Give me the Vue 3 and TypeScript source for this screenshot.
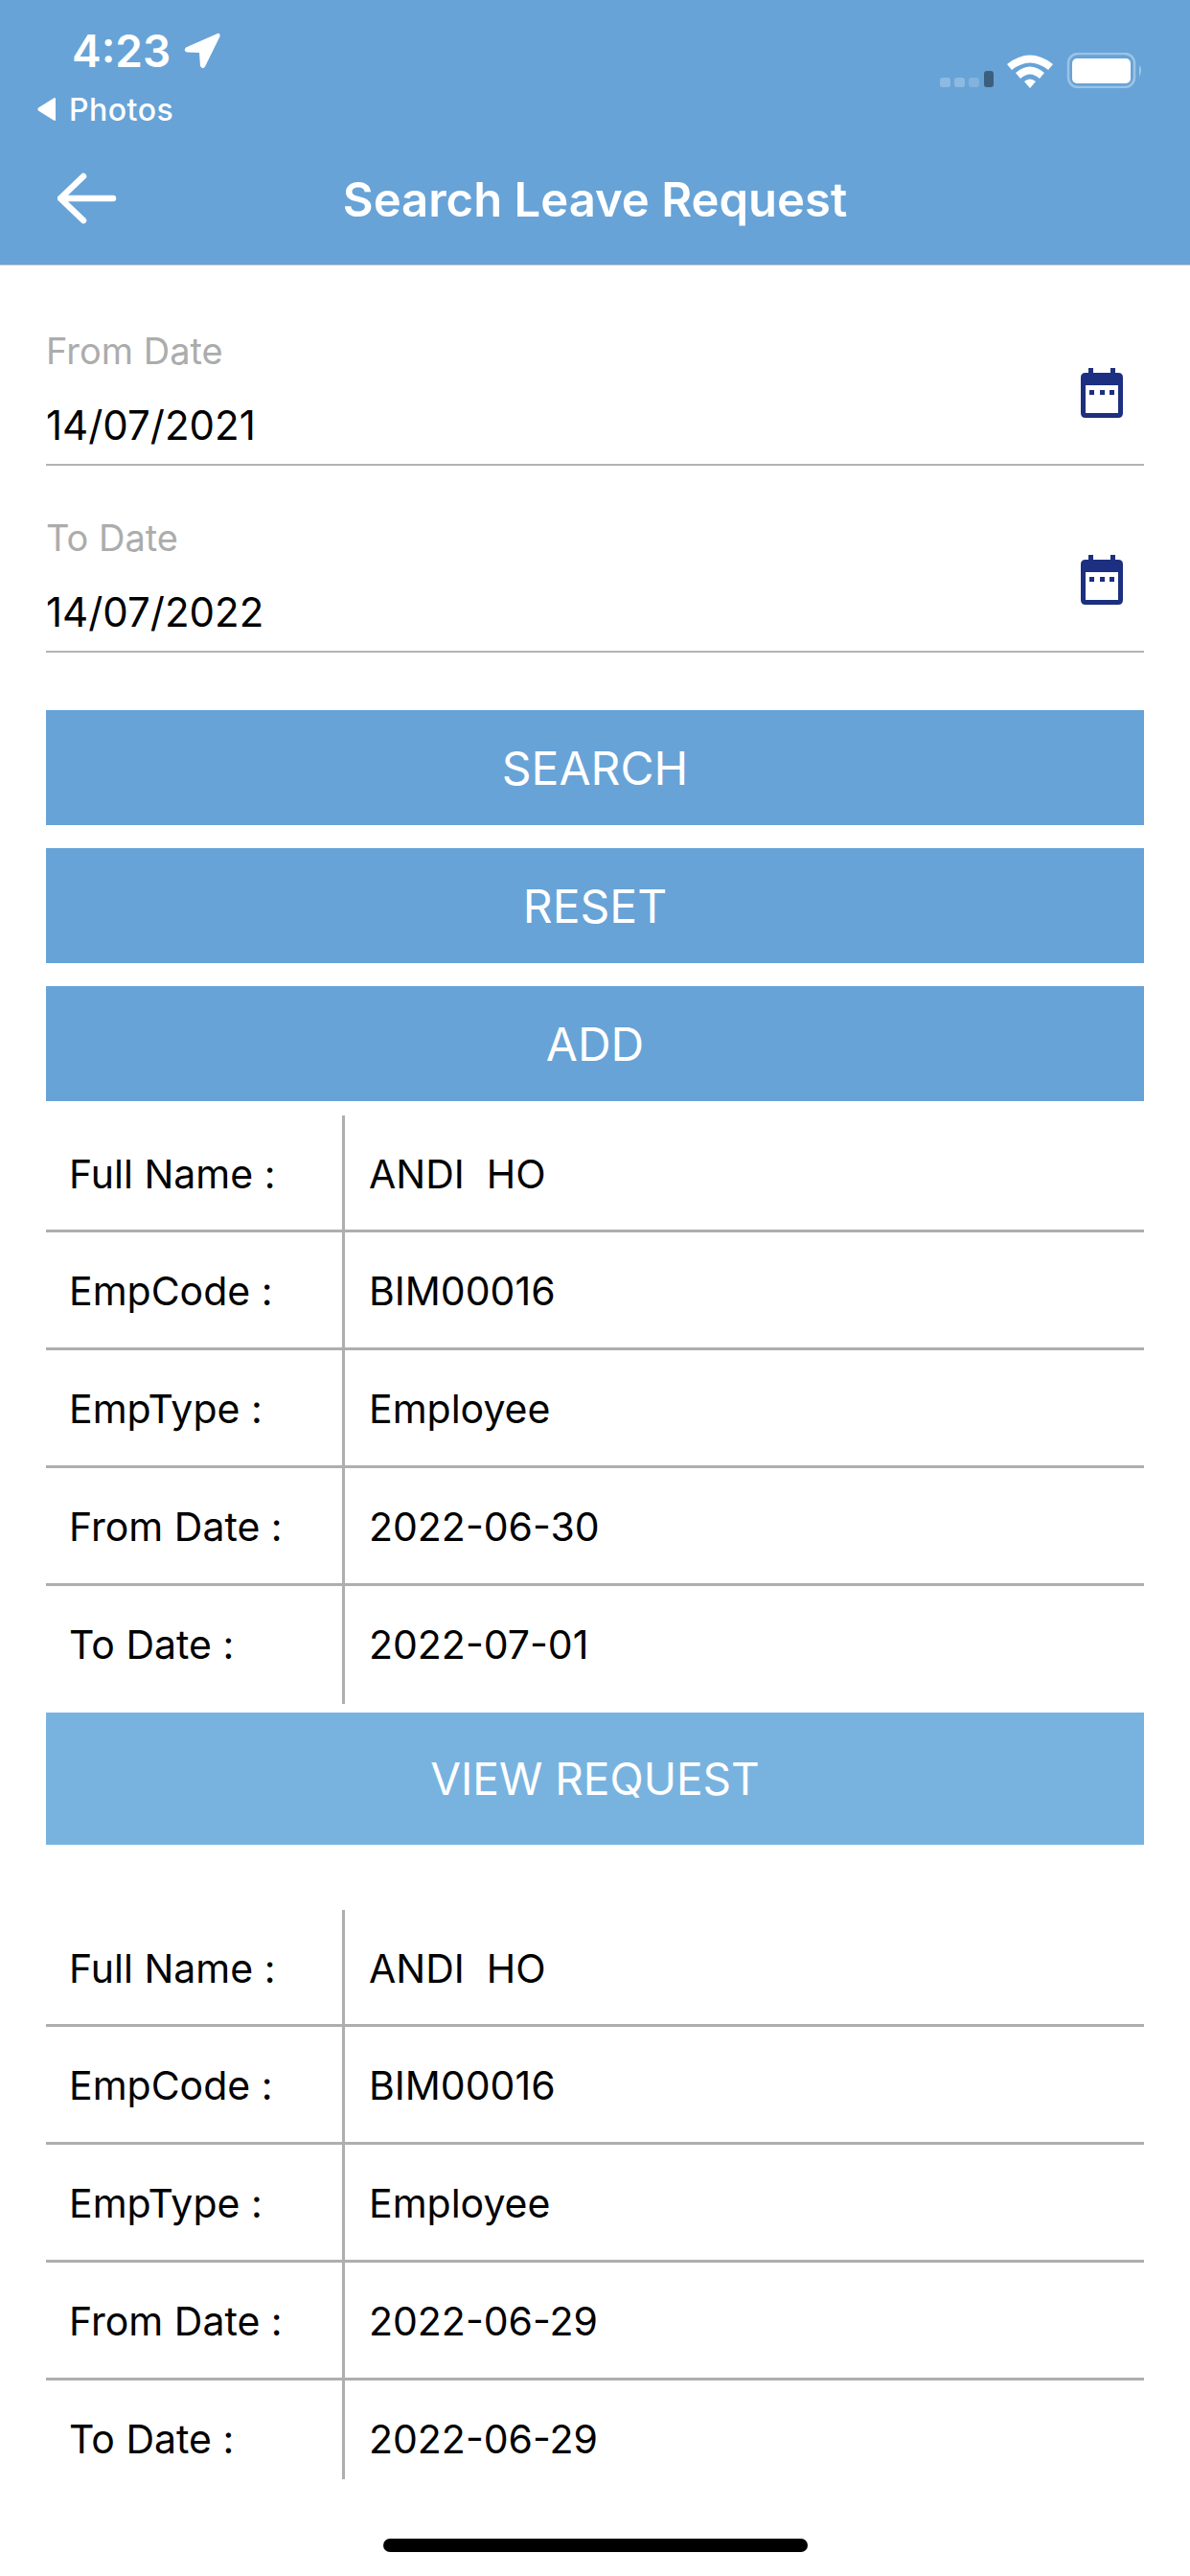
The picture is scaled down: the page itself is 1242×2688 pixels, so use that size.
<script setup lang="ts">
interface LeaveRow {
  fullName: string
  empCode: string
  empType: string
  fromDate: string
  toDate: string
}

const dateFields = [
  { label: 'From Date', value: '14/07/2021' },
  { label: 'To Date', value: '14/07/2022' },
]

const actions = ['SEARCH', 'RESET', 'ADD']

const first: LeaveRow = {
  fullName: 'ANDI\u00a0\u00a0HO',
  empCode: 'BIM00016',
  empType: 'Employee',
  fromDate: '2022-06-30',
  toDate: '2022-07-01',
}

const second: LeaveRow = { ...first, fromDate: '2022-06-29', toDate: '2022-06-29' }

function rowsOf(r: LeaveRow) {
  return [
    ['Full Name :', r.fullName],
    ['EmpCode :', r.empCode],
    ['EmpType :', r.empType],
    ['From Date :', r.fromDate],
    ['To Date :', r.toDate],
  ]
}
</script>

<template>
  <div class="page">
    <header class="header">
      <div class="status">
        <div class="status-left">
          <div class="time-row">
            <span class="time">4:23</span>
            <svg class="loc" width="38" height="38" viewBox="0 0 38 38">
              <path d="M35 1 L2 15.5 Q-1 19 3 20.5 L16 21 L17 35 Q19.5 39 22 35.5 L37.5 4 Q38 0 35 1 Z" fill="#fff" />
            </svg>
          </div>
          <div class="back-app">
            <svg width="22" height="26" viewBox="0 0 22 26">
              <path d="M20 2 L20 24 Q20 25.5 18 24.5 L2 14.5 Q0.5 13 2 11.5 L18 1.5 Q20 0.5 20 2 Z" fill="#fff" />
            </svg>
            <span>Photos</span>
          </div>
        </div>
        <svg class="status-right" width="212" height="37" viewBox="0 0 212 37">
          <rect x="0" y="26" width="11" height="10" rx="3" fill="#fff" fill-opacity="0.25" />
          <rect x="15" y="26" width="11" height="10" rx="3" fill="#fff" fill-opacity="0.25" />
          <rect x="30" y="26" width="11" height="10" rx="3" fill="#fff" fill-opacity="0.18" />
          <rect x="46" y="19" width="10" height="17" rx="3" fill="#3d5f7e" />
          <path d="M70 12 Q94 -7 118 12 L113 18 Q94 3 75 18 Z" fill="#fff" />
          <path d="M79 21 Q94 8 109 21 L104 27 Q94 18 84 27 Z" fill="#fff" />
          <path d="M88 30 Q94 25 100 30 L94 37 Z" fill="#fff" />
          <rect x="134" y="1" width="69" height="35" rx="10" fill="none" stroke="#fff" stroke-opacity="0.35" stroke-width="2.5" />
          <rect x="138" y="6" width="61" height="26" rx="5" fill="#fff" />
          <path d="M208 13 Q212 18 208 25 Z" fill="#fff" fill-opacity="0.4" />
        </svg>
      </div>
      <div class="nav">
        <svg class="back" width="64" height="54" viewBox="0 0 64 54">
          <path d="M3 27 H58 M27 4 L3 27 L27 50" fill="none" stroke="#fff" stroke-width="6.5" stroke-linecap="round" stroke-linejoin="round" />
        </svg>
        <h1 class="title">Search Leave Request</h1>
      </div>
    </header>

    <main class="content">
      <div class="fields">
        <div v-for="f in dateFields" :key="f.label" class="field">
          <div class="field-text">
            <div class="field-label">{{ f.label }}</div>
            <div class="field-value">{{ f.value }}</div>
          </div>
          <svg class="cal" width="44" height="52" viewBox="0 0 44 52">
            <rect x="8" y="0" width="5" height="8" fill="#1c2f80" />
            <rect x="31" y="0" width="5" height="8" fill="#1c2f80" />
            <path fill-rule="evenodd" d="M5 5 H39 Q44 5 44 10 V47 Q44 52 39 52 H5 Q0 52 0 47 V10 Q0 5 5 5 Z M5 18 V47 H39 V18 Z" fill="#1c2f80" />
            <rect x="9" y="23" width="5" height="5" fill="#1c2f80" />
            <rect x="20" y="23" width="5" height="5" fill="#1c2f80" />
            <rect x="30" y="23" width="5" height="5" fill="#1c2f80" />
          </svg>
        </div>
      </div>

      <div class="actions">
        <button v-for="a in actions" :key="a" class="btn">{{ a }}</button>
      </div>

      <div class="table">
        <div v-for="row in rowsOf(first)" :key="row[0]" class="row">
          <div class="cell-label">{{ row[0] }}</div>
          <div class="cell-value">{{ row[1] }}</div>
        </div>
      </div>

      <button class="btn btn-view">VIEW REQUEST</button>

      <div class="table table-cut">
        <div v-for="row in rowsOf(second)" :key="row[0]" class="row">
          <div class="cell-label">{{ row[0] }}</div>
          <div class="cell-value">{{ row[1] }}</div>
        </div>
      </div>
    </main>

    <div class="home-bar" />
  </div>
</template>

<style scoped>
.page {
  position: relative;
  width: 1242px;
  height: 2688px;
  overflow: hidden;
  background: #fff;
  font-family: Inter, "Liberation Sans", sans-serif;
  color: #000;
}

.header {
  height: 277px;
  box-sizing: border-box;
  background: #67a3d7;
  border-bottom: 1px solid #b9c4cc;
  color: #fff;
  display: flex;
  flex-direction: column;
}
.status {
  height: 136px;
  display: flex;
  justify-content: space-between;
  align-items: flex-start;
}
.status-left {
  padding: 29px 0 0 38px;
}
.time-row {
  display: flex;
  align-items: center;
  gap: 14px;
  height: 48px;
  padding-left: 37px;
}
.time {
  font-size: 46px;
  font-weight: 600;
  line-height: 48px;
}
.back-app {
  display: flex;
  align-items: center;
  gap: 12px;
  margin-top: 17px;
  height: 40px;
  font-size: 32px;
  font-weight: 500;
  letter-spacing: 0.5px;
}
.status-right {
  margin: 55px 49px 0 0;
}

.nav {
  position: relative;
  display: flex;
  justify-content: center;
  align-items: center;
  height: 138px;
  padding-top: 8px;
}
.back {
  position: absolute;
  left: 60px;
  top: 46px;
}
.title {
  margin: 0;
  font-size: 49px;
  font-weight: 600;
  line-height: 60px;
}

.content {
  padding: 63px 48px 0;
}
.fields {
  display: flex;
  flex-direction: column;
  gap: 49px;
}
.field {
  display: flex;
  justify-content: space-between;
  align-items: center;
  height: 146px;
  box-sizing: border-box;
  border-bottom: 2px solid #b3b3b3;
  padding: 0 22px 9px 0;
}
.cal {
  margin-top: 5px;
}
.field-label {
  font-size: 38px;
  line-height: 50px;
  color: #acacac;
}
.field-value {
  margin-top: 23px;
  font-size: 42px;
  line-height: 60px;
}

.actions {
  display: flex;
  flex-direction: column;
  gap: 24px;
  margin-top: 60px;
}
.btn {
  display: block;
  width: 100%;
  height: 120px;
  border: 0;
  padding: 0;
  background: #67a3d7;
  color: #fff;
  font-family: inherit;
  font-size: 48px;
  font-weight: 400;
}
.btn-view {
  height: 138px;
  margin-top: 9px;
  background: #78b3e0;
  font-size: 46px;
}

.table {
  margin-top: 15px;
}
.table-cut {
  margin-top: 68px;
  height: 594px;
  overflow: hidden;
}
.row {
  display: grid;
  grid-template-columns: 312px 1fr;
  height: 123px;
  box-sizing: border-box;
  border-bottom: 3px solid #aeaeae;
  font-size: 41px;
  line-height: 122px;
}
.row:first-child {
  height: 122px;
}
.row:last-child {
  border-bottom: 0;
}
.cell-label {
  box-sizing: border-box;
  padding-left: 24px;
  border-right: 3px solid #aeaeae;
}
.cell-value {
  padding-left: 25px;
}

.home-bar {
  position: absolute;
  left: 400px;
  bottom: 25px;
  width: 443px;
  height: 14px;
  border-radius: 7px;
  background: #000;
}
</style>

<style>
body {
  margin: 0;
}
</style>
